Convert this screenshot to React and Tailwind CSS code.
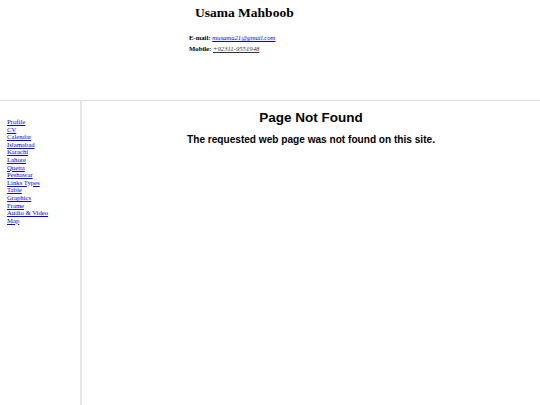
const links = [
  'Profile',
  'CV',
  'Calendar',
  'Islamabad',
  'Karachi',
  'Lahore',
  'Quetta',
  'Peshawar',
  'Links Types',
  'Table',
  'Graphics',
  'Frame',
  'Audio & Video',
  'Map',
]

export default function App() {
  return (
    <div className="w-[540px] h-[405px] bg-white flex flex-col overflow-hidden font-['Liberation_Serif',serif] text-black">
      <header className="h-[101px] border-b border-[#dcdcdc] shrink-0">
        <h1 className="pl-[195px] pt-[4px] text-[13.5px] leading-[18px] font-bold">Usama Mahboob</h1>
        <div className="pl-[189px] pt-[10px] text-[6.7px] leading-[11px]">
          <p>
            <b>E-mail:</b>{' '}
            <a href="#" className="italic underline text-[#0000ee]">musama21@gmail.com</a>
          </p>
          <p>
            <b>Mobile:</b>{' '}
            <a href="#" className="italic underline text-[#333]">+92311-9551948</a>
          </p>
        </div>
      </header>
      <div className="flex flex-1">
        <nav className="w-[82px] shrink-0 border-r-2 border-[#e6e6e6] pl-[7px] pt-[17px] text-[6.7px] leading-[7.6px]">
          {links.map(l => (
            <div key={l}>
              <a href="#" className="underline text-[#0000ee]">{l}</a>
            </div>
          ))}
        </nav>
        <main className="flex-1 text-center font-['Liberation_Sans',Arial,sans-serif] font-bold">
          <h2 className="pt-[8px] text-[13.5px] leading-[18px]">Page Not Found</h2>
          <p className="pt-[6px] text-[10.1px] leading-[14px]">The requested web page was not found on this site.</p>
        </main>
      </div>
    </div>
  )
}
